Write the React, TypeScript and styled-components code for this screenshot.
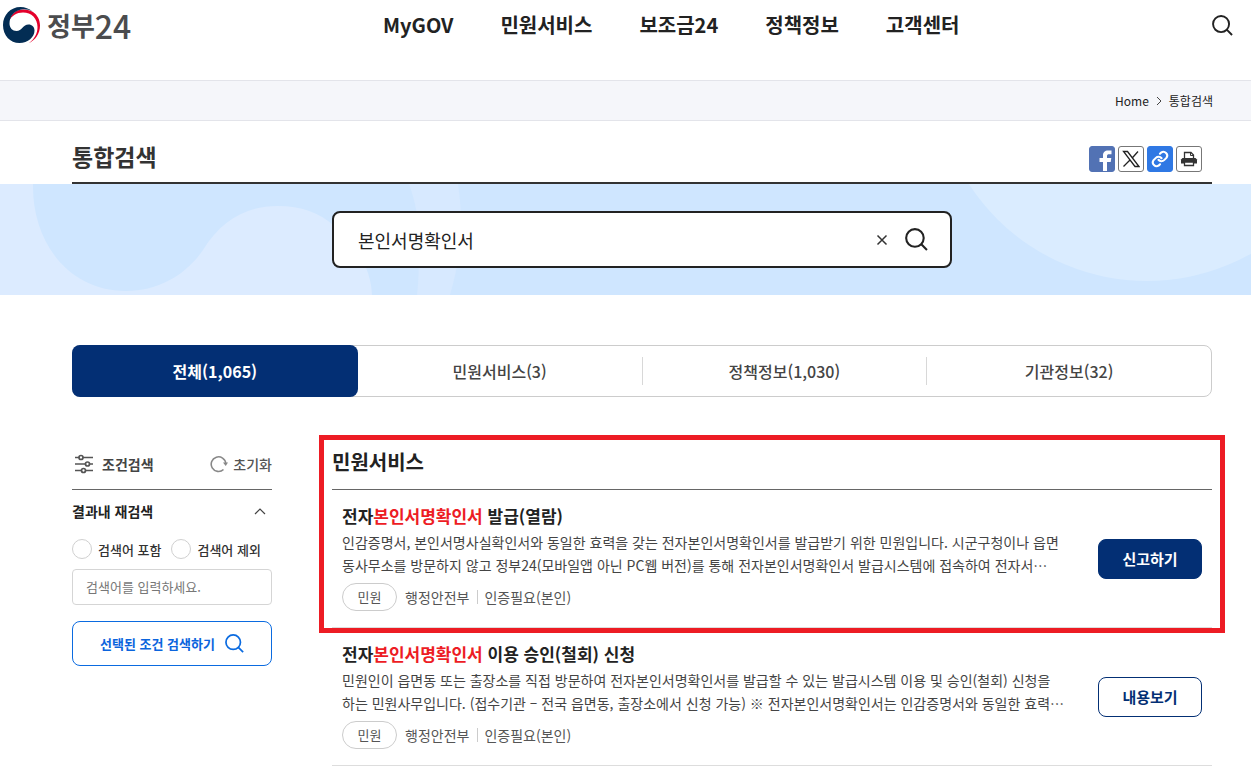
import React from 'react';
import styled, { createGlobalStyle } from 'styled-components';

const GlobalStyle = createGlobalStyle`
  * { box-sizing: border-box; }
  body { margin: 0; background: #fff; color: #222; font-family: "Noto Sans CJK KR", "Noto Sans", sans-serif; font-size: 14px; }
  h1, h2, h3, p { margin: 0; padding: 0; }
  a { color: inherit; text-decoration: none; }
  button, input { font-family: inherit; }
  button { cursor: pointer; }
  svg { display: block; flex: none; }
`;

const Header = styled.header`
  display: flex;
  align-items: flex-start;
  height: 80px;
  padding: 0 18px 0 2px;
`;
const Logo = styled.a`
  display: flex;
  align-items: center;
  gap: 6px;
  width: 381px;
  height: 50px;
  color: #4b4c4e;
`;
const LogoName = styled.span`
  display: flex;
  align-items: center;
`;
const LogoText = styled.span<{ $size: number; $weight: number }>`
  font-size: ${(p) => p.$size}px;
  font-weight: ${(p) => p.$weight};
  line-height: 48px;
`;
const Nav = styled.nav`
  display: flex;
  flex: 1;
  gap: 47px;
  font-size: 20px;
  font-weight: 700;
  line-height: 50px;
`;
const IconButton = styled.button`
  display: flex;
  align-items: center;
  justify-content: center;
  height: 24px;
  padding: 0;
  border: 0;
  background: none;
`;
const HeaderSearch = styled(IconButton)`
  height: 50px;
`;
const Crumbs = styled.nav`
  display: flex;
  align-items: center;
  justify-content: flex-end;
  gap: 6px;
  height: 41px;
  padding-right: 38px;
  border: solid #e3e4ea;
  border-width: 1px 0;
  background: #f5f6fa;
  font-size: 12px;
`;
const Container = styled.div`
  padding: 0 39px 0 72px;
`;
const TitleRow = styled.div`
  display: flex;
  align-items: center;
  justify-content: space-between;
  height: 63px;
  padding: 14px 10px 0 0;
  border-bottom: 2px solid #333;
`;
const PageTitle = styled.h1`
  padding-bottom: 6px;
  color: #333;
  font-size: 23px;
  line-height: 36px;
`;
const Shares = styled.div`
  display: flex;
  gap: 3px;
`;
const Share = styled.button<{ $bg?: string }>`
  display: flex;
  align-items: center;
  justify-content: center;
  width: 26px;
  height: 26px;
  padding: 0;
  overflow: hidden;
  border: 1px solid ${(p) => p.$bg || '#777'};
  border-radius: 3px;
  background: ${(p) => p.$bg || '#fff'};
`;
const Banner = styled.div`
  position: relative;
  display: flex;
  align-items: center;
  justify-content: center;
  height: 111px;
  padding: 0 39px 0 72px;
  overflow: hidden;
  background: #cfe6ff;
`;
const BannerArt = styled.svg`
  position: absolute;
  inset: 0;
  width: 100%;
  height: 100%;
`;
const SearchBox = styled.form`
  position: relative;
  display: flex;
  align-items: center;
  gap: 17px;
  width: 620px;
  height: 57px;
  padding: 0 22px 0 24px;
  border: 2px solid #222;
  border-radius: 8px;
  background: #fff;
`;
const SearchInput = styled.input`
  flex: 1;
  min-width: 0;
  padding: 0;
  border: 0;
  outline: 0;
  color: #222;
  font-size: 18px;
  line-height: 28px;
`;
const Tabs = styled.div`
  display: flex;
  height: 52px;
  margin-top: 50px;
  border: 1px solid #ccc;
  border-radius: 8px;
`;
const Tab = styled.button<{ $active?: boolean }>`
  display: flex;
  flex: ${(p) => (p.$active ? '1 0 2px' : '1 0 0')};
  align-items: center;
  justify-content: center;
  margin: ${(p) => (p.$active ? '-1px 0 -1px -1px' : '0')};
  padding: 0;
  border: 0;
  border-radius: 8px;
  background: ${(p) => (p.$active ? '#032f74' : 'transparent')};
  color: ${(p) => (p.$active ? '#fff' : '#444')};
  font-size: 16px;
  font-weight: ${(p) => (p.$active ? 700 : 500)};
`;
const TabDivider = styled.span`
  width: 1px;
  height: 28px;
  margin-top: 11px;
  background: #d8d8d8;
`;
const Columns = styled.div`
  display: flex;
  gap: 60px;
  padding-top: 38px;
`;
const Sidebar = styled.aside`
  width: 200px;
  flex: none;
`;
const SideHead = styled.div`
  display: flex;
  align-items: center;
  justify-content: space-between;
  height: 55px;
  padding-top: 4px;
  border-bottom: 1px solid #666;
`;
const SideTitle = styled.h2`
  display: flex;
  align-items: center;
  gap: 8px;
  padding-left: 2px;
  color: #444;
  font-size: 14px;
`;
const Reset = styled(IconButton)`
  gap: 5px;
  color: #555;
  font-size: 14px;
  font-weight: 500;
`;
const Fold = styled.button`
  display: flex;
  align-items: center;
  justify-content: space-between;
  width: 100%;
  height: 42px;
  padding: 0 6px 0 0;
  border: 0;
  background: none;
  color: #222;
  font-size: 14px;
  font-weight: 700;
`;
const Radios = styled.div`
  display: flex;
  gap: 10px;
  height: 34px;
`;
const RadioLabel = styled.label`
  display: flex;
  align-items: center;
  gap: 6px;
  color: #333;
  font-size: 13px;
  font-weight: 500;
`;
const Radio = styled.input`
  appearance: none;
  width: 20px;
  height: 20px;
  margin: 0;
  border: 1px solid #d0d0d0;
  border-radius: 50%;
  background: #fff;
  &:checked { border: 6px solid #0b64dd; }
`;
const KeywordInput = styled.input`
  display: block;
  width: 100%;
  height: 36px;
  margin: 3px 0 16px;
  padding: 0 13px 2px;
  border: 1px solid #d5d5d5;
  border-radius: 4px;
  color: #333;
  font-size: 13px;
  &::placeholder { color: #777; }
`;
const ApplyButton = styled.button`
  display: flex;
  align-items: center;
  justify-content: center;
  gap: 10px;
  width: 100%;
  height: 45px;
  padding: 0;
  border: 1px solid #0b6be0;
  border-radius: 8px;
  background: #fff;
  color: #0b64dd;
  font-size: 13px;
  font-weight: 700;
`;
const Main = styled.main`
  flex: 1;
  min-width: 0;
`;
const Highlighted = styled.div`
  position: relative;
  &::after {
    content: '';
    position: absolute;
    inset: 0 -13px -5px;
    border: 5px solid #ed1c24;
    pointer-events: none;
  }
`;
const SectionTitle = styled.h2`
  height: 55px;
  border-bottom: 1px solid #666;
  font-size: 20px;
  line-height: 54px;
`;
const Item = styled.article`
  display: flex;
  align-items: center;
  gap: 16px;
  padding: 14px 10px 16px;
  border-bottom: 1px solid #ddd;
`;
const ItemBody = styled.div`
  flex: 1;
  min-width: 0;
`;
const ItemTitle = styled.h3`
  margin-bottom: 3px;
  font-size: 17px;
  line-height: 24px;
`;
const Hit = styled.em`
  color: #ed1c24;
  font-style: normal;
`;
const Desc = styled.p`
  margin-bottom: 6px;
  color: #444;
  font-size: 14px;
  line-height: 23px;
  white-space: pre-line;
`;
const Meta = styled.div`
  display: flex;
  align-items: center;
  gap: 8px;
  color: #555;
  font-size: 14px;
  line-height: 26px;
`;
const Pill = styled.span`
  width: 55px;
  height: 28px;
  border: 1px solid #ccc;
  border-radius: 14px;
  font-size: 13px;
  line-height: 25px;
  text-align: center;
`;
const Need = styled.span`
  display: flex;
  align-items: center;
  gap: 6px;
  &::before {
    content: '';
    width: 1px;
    height: 14px;
    background: #ccc;
  }
`;
const Action = styled.button<{ $primary?: boolean }>`
  flex: none;
  width: 104px;
  height: 40px;
  margin-top: 2px;
  padding: 0;
  border: 1px solid #032f74;
  border-radius: 8px;
  background: ${(p) => (p.$primary ? '#032f74' : '#fff')};
  color: ${(p) => (p.$primary ? '#fff' : '#032f74')};
  font-size: 15px;
  font-weight: 700;
`;

const Magnifier = ({ size, color = '#222', stroke = 2 }: { size: number; color?: string; stroke?: number }) => (
  <svg width={size} height={size} viewBox="0 0 22 22" fill="none" stroke={color} strokeWidth={stroke}>
    <circle cx="9.5" cy="9.5" r="8.4" />
    <path d="M15.4 15.4 21 21" />
  </svg>
);

const Emblem = () => (
  <svg width="39" height="38" viewBox="0 0 39 38">
    <path fill="#e4002b" d="M7 15C9 8 14 3.600 21 3.500 25 3.400 28.500 4.500 31 6c4.500 3 7 8 7 13.500 0 8-4.500 14.500-11.500 18 6-4.500 9-10 9-16.500C35.500 12.500 29.500 6.500 21 6.500 14.500 6.500 10 9.500 7 15Z" />
    <path fill="#032d54" d="M30.500 5.500C27 2.500 23 1 18.500 1 8.500 1 1 9 1 19c0 10.500 7 18 16.500 18C26 37 32.500 31 32.500 24.500c0-3.500-2.500-6-6-6-5.500 0-6.500 6.500-12 6.500C10.500 25 7.500 22 7.500 17.500 7.500 10 13 4 21 3.300c3.500-.2 6.500.5 9.500 2.200Z" />
  </svg>
);

type Entry = { rest: string; desc: string; action: string; primary?: boolean };

const ResultItem = ({ rest, desc, action, primary }: Entry) => (
  <Item>
    <ItemBody>
      <ItemTitle><a href="#item">전자<Hit>본인서명확인서</Hit> {rest}</a></ItemTitle>
      <Desc>{desc}</Desc>
      <Meta>
        <Pill>민원</Pill>
        <span>행정안전부</span>
        <Need>인증필요(본인)</Need>
      </Meta>
    </ItemBody>
    <Action type="button" $primary={primary}>{action}</Action>
  </Item>
);

const navItems = ['MyGOV', '민원서비스', '보조금24', '정책정보', '고객센터'];
const tabs = ['전체(1,065)', '민원서비스(3)', '정책정보(1,030)', '기관정보(32)'];

export default function App() {
  return (
    <div lang="ko">
      <GlobalStyle />
      <Header>
        <Logo href="#home">
          <Emblem />
          <LogoName>
            <LogoText $size={26} $weight={700}>정부</LogoText>
            <LogoText $size={32} $weight={500}>24</LogoText>
          </LogoName>
        </Logo>
        <Nav>{navItems.map((n) => <a key={n} href="#menu">{n}</a>)}</Nav>
        <HeaderSearch type="button" aria-label="검색"><Magnifier size={21} /></HeaderSearch>
      </Header>
      <Crumbs>
        <a href="#home">Home</a>
        <svg width="8" height="10" viewBox="0 0 8 10" fill="none" stroke="#444"><path d="M2 1l4 4-4 4" /></svg>
        <a href="#search">통합검색</a>
      </Crumbs>
      <Container>
        <TitleRow>
          <PageTitle>통합검색</PageTitle>
          <Shares>
            <Share type="button" $bg="#5272b4" aria-label="페이스북">
              <svg width="24" height="24" viewBox="0 0 24 24"><path fill="#fff" d="M13 24v-9H9.500v-4H13V8.500C13 5 15 3.500 18 3.500h3.500v3.800H19c-1.400 0-2 .6-2 1.900V11h4.300l-.6 4H17v9Z" /></svg>
            </Share>
            <Share type="button" aria-label="X">
              <svg width="18" height="18" viewBox="0 0 18 18" fill="none" stroke="#222" strokeWidth="1.300"><path d="M1.500 1.500h4l11.500 15h-4ZM16 1.500 10 8.200M8 10l-6.500 6.500" /></svg>
            </Share>
            <Share type="button" $bg="#2f78e4" aria-label="링크">
              <svg width="18" height="18" viewBox="0 0 24 24" fill="none" stroke="#fff" strokeWidth="2.800" strokeLinecap="round"><path d="M10 13a5 5 0 0 0 7.500.5l3-3a5 5 0 0 0-7-7L12 5M14 11a5 5 0 0 0-7.500-.5l-3 3a5 5 0 0 0 7 7L12 19" /></svg>
            </Share>
            <Share type="button" aria-label="인쇄">
              <svg width="18" height="18" viewBox="0 0 18 18"><path fill="#fff" stroke="#333" strokeWidth="1.300" d="M4.500 8V2.500h6.500l2.500 2.500v3" /><path fill="none" stroke="#333" d="M10.500 2.500v3h3" /><path fill="#333" d="M2.500 8h13l1.500 1.500V13.500H1V9.500Z" /><path fill="#fff" stroke="#333" strokeWidth="1.300" d="M4.500 12h9v3.500h-9Z" /></svg>
            </Share>
          </Shares>
        </TitleRow>
      </Container>
      <Banner>
        <BannerArt viewBox="0 0 1251 111" preserveAspectRatio="none" aria-hidden="true">
          <path fill="#dcebff" d="M0 0H33C32 60 70 107 126 107c32 0 60-16 77-41 18-29 42-44 75-44 23 0 42 7 55 19 22 18 38 42 39 70H0Z" />
          <path fill="#d7e9ff" d="M409 0c6 16 10 36 10 56 0 20 0 38-2 55h33c7-24 11-48 11-71 0-14-1-27-3-40Z" />
          <circle fill="#daecff" cx="1147" cy="-115" r="212" />
        </BannerArt>
        <SearchBox onSubmit={(e) => e.preventDefault()}>
          <SearchInput aria-label="검색어" defaultValue="본인서명확인서" />
          <IconButton type="button" aria-label="지우기">
            <svg width="12" height="12" viewBox="0 0 12 12" fill="none" stroke="#333" strokeWidth="1.500"><path d="M1.500 1.500l9 9M10.500 1.500l-9 9" /></svg>
          </IconButton>
          <IconButton type="submit" aria-label="검색"><Magnifier size={23} /></IconButton>
        </SearchBox>
      </Banner>
      <Container>
        <Tabs role="tablist">
          {tabs.map((t, i) => (
            <React.Fragment key={t}>
              {i > 1 && <TabDivider />}
              <Tab type="button" role="tab" aria-selected={i === 0} $active={i === 0}>{t}</Tab>
            </React.Fragment>
          ))}
        </Tabs>
        <Columns>
          <Sidebar>
            <SideHead>
              <SideTitle>
                <svg width="20" height="20" viewBox="0 0 20 20" fill="#fff" stroke="#555" strokeWidth="1.700">
                  <path d="M1 3.500h18M1 10h18M1 16.500h18" />
                  <circle cx="7" cy="3.500" r="2" /><circle cx="13.500" cy="10" r="2" /><circle cx="9.500" cy="16.500" r="2" />
                </svg>
                조건검색
              </SideTitle>
              <Reset type="button">
                <svg width="18" height="18" viewBox="0 0 18 18" fill="none" stroke="#888" strokeWidth="1.600"><path d="M13.500 14.500A7.300 7.300 0 1 1 15.800 8.500" /><path fill="#888" stroke="none" d="M13 7.500h5L15.700 11Z" /></svg>
                초기화
              </Reset>
            </SideHead>
            <Fold type="button" aria-expanded="true">
              결과내 재검색
              <svg width="12" height="8" viewBox="0 0 12 8" fill="none" stroke="#444" strokeWidth="1.200"><path d="M1 7l5-5 5 5" /></svg>
            </Fold>
            <Radios>
              <RadioLabel><Radio type="radio" name="scope" />검색어 포함</RadioLabel>
              <RadioLabel><Radio type="radio" name="scope" />검색어 제외</RadioLabel>
            </Radios>
            <KeywordInput aria-label="검색어" placeholder="검색어를 입력하세요." />
            <ApplyButton type="button">선택된 조건 검색하기<Magnifier size={19} color="#0b6be0" stroke={2} /></ApplyButton>
          </Sidebar>
          <Main>
            <Highlighted>
              <SectionTitle>민원서비스</SectionTitle>
              <ResultItem
                primary
                rest="발급(열람)"
                action="신고하기"
                desc={'인감증명서, 본인서명사실확인서와 동일한 효력을 갖는 전자본인서명확인서를 발급받기 위한 민원입니다. 시군구청이나 읍면\n동사무소를 방문하지 않고 정부24(모바일앱 아닌 PC웹 버전)를 통해 전자본인서명확인서 발급시스템에 접속하여 전자서…'}
              />
            </Highlighted>
            <ResultItem
              rest="이용 승인(철회) 신청"
              action="내용보기"
              desc={'민원인이 읍면동 또는 출장소를 직접 방문하여 전자본인서명확인서를 발급할 수 있는 발급시스템 이용 및 승인(철회) 신청을\n하는 민원사무입니다. (접수기관 – 전국 읍면동, 출장소에서 신청 가능) ※ 전자본인서명확인서는 인감증명서와 동일한 효력…'}
            />
          </Main>
        </Columns>
      </Container>
    </div>
  );
}
